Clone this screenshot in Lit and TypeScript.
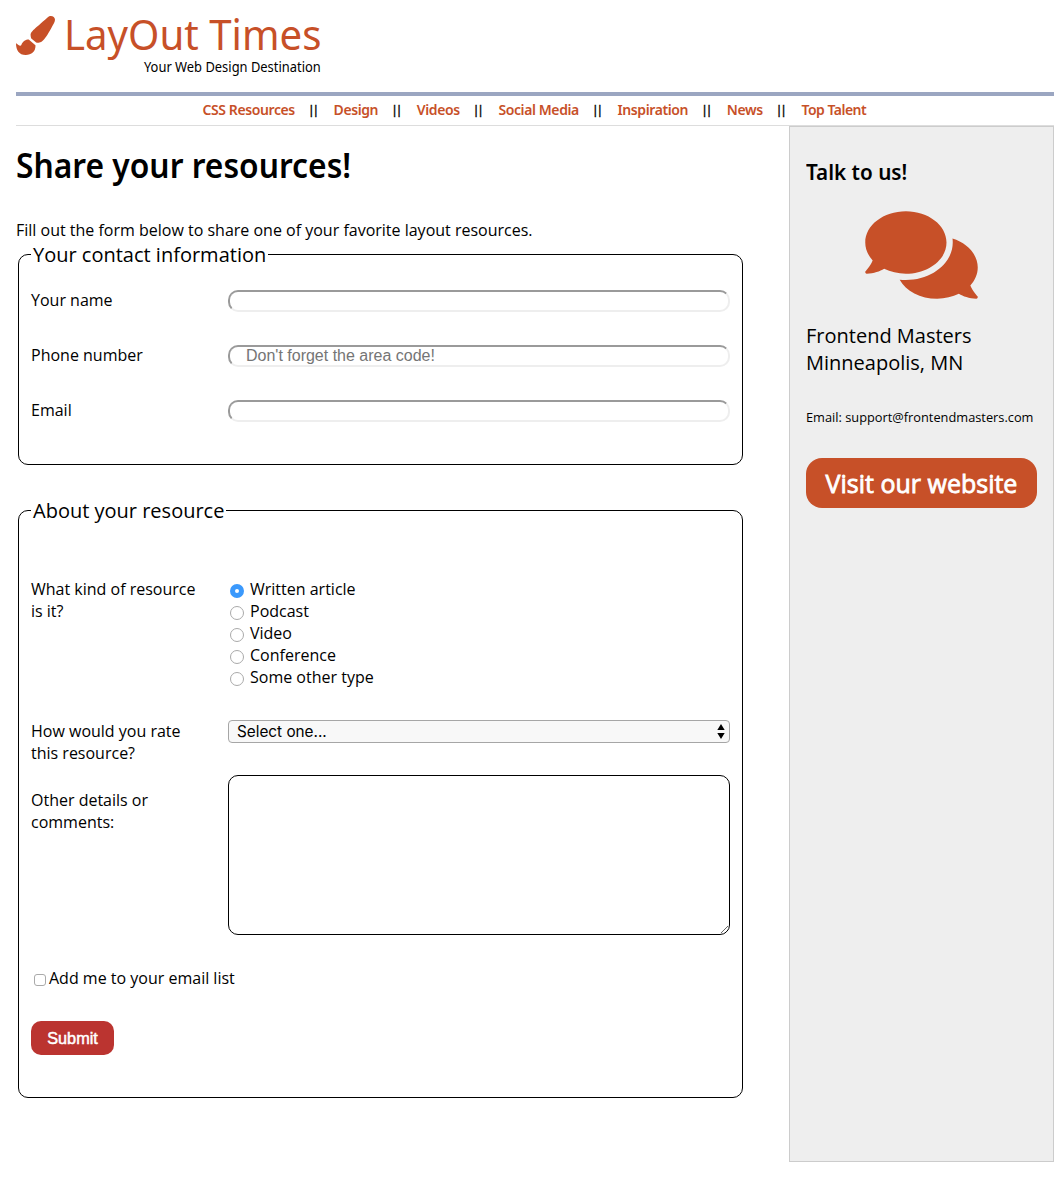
import { LitElement, html, css } from "lit";
import { customElement, state } from "lit/decorators.js";

const NAV = ["CSS Resources", "Design", "Videos", "Social Media", "Inspiration", "News", "Top Talent"];
const KINDS = ["Written article", "Podcast", "Video", "Conference", "Some other type"];

@customElement("site-header")
class SiteHeader extends LitElement {
  static styles = css`
    :host { display: block; margin-left: 16px; font-family: "Noto Sans", "Open Sans", sans-serif; }
    .brand { box-sizing: border-box; height: 96px; padding-top: 7px; border-bottom: 4px solid #9ba6c1; }
    .logo { display: flex; width: 306px; color: #c75028; }
    .brush { width: 39px; height: 39px; margin: 9px 9px 0 0; flex: none; fill: currentColor; }
    .title { font-size: 41.5px; line-height: 54px; white-space: nowrap; transform: scaleX(.968); transform-origin: 0 0; }
    .tagline { width: 305px; display: flex; justify-content: flex-end; margin-top: -3px; font-size: 14px; line-height: 18px; white-space: nowrap; }
    .tagline span { transform: scaleX(.922); transform-origin: 100% 0; }
    nav { display: flex; align-items: center; box-sizing: border-box; height: 30px; padding: 0 0 2px 186.5px; border-bottom: 1px solid #ddd; font-size: 14px; }
    a { color: #c75028; font-weight: 600; letter-spacing: -.4px; white-space: nowrap; text-decoration: none; }
    a:last-child { letter-spacing: -.5px; }
    .bar { width: 38.7px; text-align: center; font: 12px "Liberation Sans", sans-serif; letter-spacing: 1.4px; -webkit-text-stroke: .3px #000; }
  `;
  render() {
    return html`
      <header>
        <div class="brand">
          <div class="logo">
            <svg class="brush" viewBox="0 0 512 512"><path d="M167.02 309.34c-40.12 2.58-76.53 17.86-97.19 72.3-2.35 6.21-8 9.98-14.59 9.98-11.11 0-45.46-27.67-55.25-34.35C0 439.62 37.93 512 128 512c75.86 0 128-43.77 128-120.19 0-3.11-.65-6.08-.97-9.13l-88.01-73.34zM457.89 0c-15.16 0-29.37 6.71-40.21 16.45C213.27 199.05 192 203.34 192 257.09c0 13.7 3.25 26.76 8.73 38.7l63.82 53.18c7.21 1.8 14.64 3.03 22.39 3.03 62.11 0 98.11-45.47 211.16-256.46 7.38-14.35 13.9-29.85 13.9-45.99C512 20.64 486 0 457.89 0z"/></svg>
            <span class="title">LayOut Times</span>
          </div>
          <div class="tagline"><span>Your Web Design Destination</span></div>
        </div>
        <nav>${NAV.map((n, i) => html`${i ? html`<span class="bar">||</span>` : ""}<a>${n}</a>`)}</nav>
      </header>`;
  }
}

@customElement("contact-aside")
class ContactAside extends LitElement {
  static styles = css`
    :host { display: block; box-sizing: border-box; width: 265px; height: 1036px; padding: 29px 16px 0; background: #eee; border: 1px solid #ccc; }
    h2 { margin: 0; font: 600 22px/30px "Noto Sans", sans-serif; white-space: nowrap; transform: scaleX(.94); transform-origin: 0 0; }
    .bubbles { display: block; width: 113px; height: 100px; margin: 19px auto 17px; fill: #c75028; }
    .place { margin: 0; font-size: 20px; line-height: 27px; }
    .email { margin: 32px 0; font-size: 12.8px; line-height: 18px; white-space: nowrap; }
    .visit { display: block; height: 50px; border-radius: 16px; background: #c75028; color: #fff; text-align: center; font-size: 25px; line-height: 51px; -webkit-text-stroke: .8px #fff; }
  `;
  render() {
    return html`
      <h2>Talk to us!</h2>
      <svg class="bubbles" viewBox="0 0 576 512"><path d="M416 192c0-88.4-93.1-160-208-160S0 103.6 0 192c0 34.3 14.1 65.9 38 92-13.4 30.2-35.5 54.2-35.8 54.5-2.2 2.3-2.8 5.7-1.5 8.7S4.8 352 8 352c36.6 0 66.9-12.3 88.7-25 32.2 15.7 70.3 25 111.3 25 114.9 0 208-71.6 208-160zm122 220c23.9-26 38-57.7 38-92 0-66.9-53.5-124.2-129.3-148.1.9 6.6 1.3 13.3 1.3 20.1 0 105.9-107.7 192-240 192-10.8 0-21.3-.8-31.7-1.9C207.8 439.6 281.8 480 368 480c41 0 79.1-9.2 111.3-25 21.8 12.7 52.1 25 88.7 25 3.2 0 6.1-1.9 7.3-4.8 1.3-2.9.7-6.3-1.5-8.7-.3-.3-22.4-24.2-35.8-54.5z"/></svg>
      <p class="place">Frontend Masters<br />Minneapolis, MN</p>
      <p class="email">Email: support@frontendmasters.com</p>
      <a class="visit">Visit our website</a>`;
  }
}

@customElement("resource-form")
class ResourceForm extends LitElement {
  static styles = css`
    :host { display: block; font-size: 16px; line-height: 22px; }
    fieldset { box-sizing: border-box; width: 725px; margin: 0 2px; padding: 0 12px; border: 1px solid #000; border-radius: 10px; }
    .contact { height: 224px; }
    .about { height: 601px; margin-top: 32px; }
    legend { margin: 0; padding: 0 2px; font-size: 20px; line-height: 27px; }
    .row { display: grid; grid-template-columns: 197px 502px; align-items: start; }
    .contact .row { height: 55px; }
    .contact .row:first-of-type { margin-top: 21px; }
    .label { width: 172px; }
    .text { box-sizing: border-box; width: 100%; height: 22px; margin: 1px 0 0; padding: 0 16px; border: 2px solid; border-color: #9a9a9a #eee #eee #9a9a9a; border-radius: 10px; background: #fff; outline: none; font: 16px/18px "Liberation Sans", Arial, sans-serif; }
    .text::placeholder { color: #757575; opacity: 1; }
    .kind { height: 142px; margin-top: 54px; }
    .option { display: flex; align-items: center; height: 22px; }
    .radio { appearance: none; box-sizing: border-box; width: 14px; height: 14px; margin: 4px 6px 0 2px; border: 1px solid #aaa; border-radius: 50%; background: #fff; }
    .radio:checked { border: 5px solid #3b99fc; }
    .rate { height: 55px; }
    .select { display: flex; align-items: center; justify-content: space-between; box-sizing: border-box; height: 23px; padding: 0 4px 0 8px; border: 1px solid #a6a6a6; border-radius: 4px; background: #f8f8f8; font: 15.3px "Inter", sans-serif; }
    .arrows { width: 8px; height: 15px; }
    .details { height: 192px; }
    .details .label { padding-top: 14px; }
    textarea { display: block; box-sizing: border-box; width: 502px; height: 160px; margin: 0; border: 1px solid #000; border-radius: 10px; background: #fff; outline: none; resize: vertical; }
    .list { display: flex; align-items: center; height: 22px; }
    .check { appearance: none; box-sizing: border-box; width: 12px; height: 12px; margin: 4px 3px 0; border: 1px solid #aaa; border-radius: 3px; background: #fff; }
    .submit { width: 83px; height: 34px; margin: 32px 0 0; padding: 1px 0 0; border: 0; border-radius: 10px; background: #bb3430; color: #fff; font: 16.3px "Liberation Sans", Arial, sans-serif; -webkit-text-stroke: .5px #fff; }
  `;
  @state() kind = KINDS[0];
  field(label: string, hint = "") {
    return html`<div class="row"><label class="label">${label}</label><input class="text" placeholder=${hint} /></div>`;
  }
  render() {
    return html`
      <fieldset class="contact">
        <legend>Your contact information</legend>
        ${this.field("Your name")}
        ${this.field("Phone number", "Don't forget the area code!")}
        ${this.field("Email")}
      </fieldset>
      <fieldset class="about">
        <legend>About your resource</legend>
        <div class="row kind">
          <span class="label">What kind of resource is it?</span>
          <div>${KINDS.map((k) => html`<label class="option"><input class="radio" type="radio" name="kind" .checked=${this.kind === k} @change=${() => (this.kind = k)} />${k}</label>`)}</div>
        </div>
        <div class="row rate">
          <span class="label">How would you rate this resource?</span>
          <div class="select">Select one...<svg class="arrows" viewBox="0 0 8 15"><path d="M4 0l3.7 6h-7.4zM4 15l3.7-6h-7.4z"/></svg></div>
        </div>
        <div class="row details">
          <span class="label">Other details or comments:</span>
          <textarea></textarea>
        </div>
        <label class="list"><input class="check" type="checkbox" />Add me to your email list</label>
        <button class="submit">Submit</button>
      </fieldset>`;
  }
}

@customElement("app-root")
class AppRoot extends LitElement {
  static styles = css`
    :host { display: block; min-height: 1178px; background: #fff; color: #000; font-family: "Open Sans", "Noto Sans", sans-serif; }
    .columns { display: flex; justify-content: space-between; align-items: flex-start; padding-left: 16px; }
    h1 { margin: 15px 0 30px; font: 600 34.5px/48px "Noto Sans", sans-serif; white-space: nowrap; transform: scaleX(.921); transform-origin: 0 0; }
    .intro { margin: 0; font-size: 16px; line-height: 22px; }
  `;
  render() {
    return html`
      <site-header></site-header>
      <div class="columns">
        <main>
          <h1>Share your resources!</h1>
          <p class="intro">Fill out the form below to share one of your favorite layout resources.</p>
          <resource-form></resource-form>
        </main>
        <contact-aside></contact-aside>
      </div>`;
  }
}
